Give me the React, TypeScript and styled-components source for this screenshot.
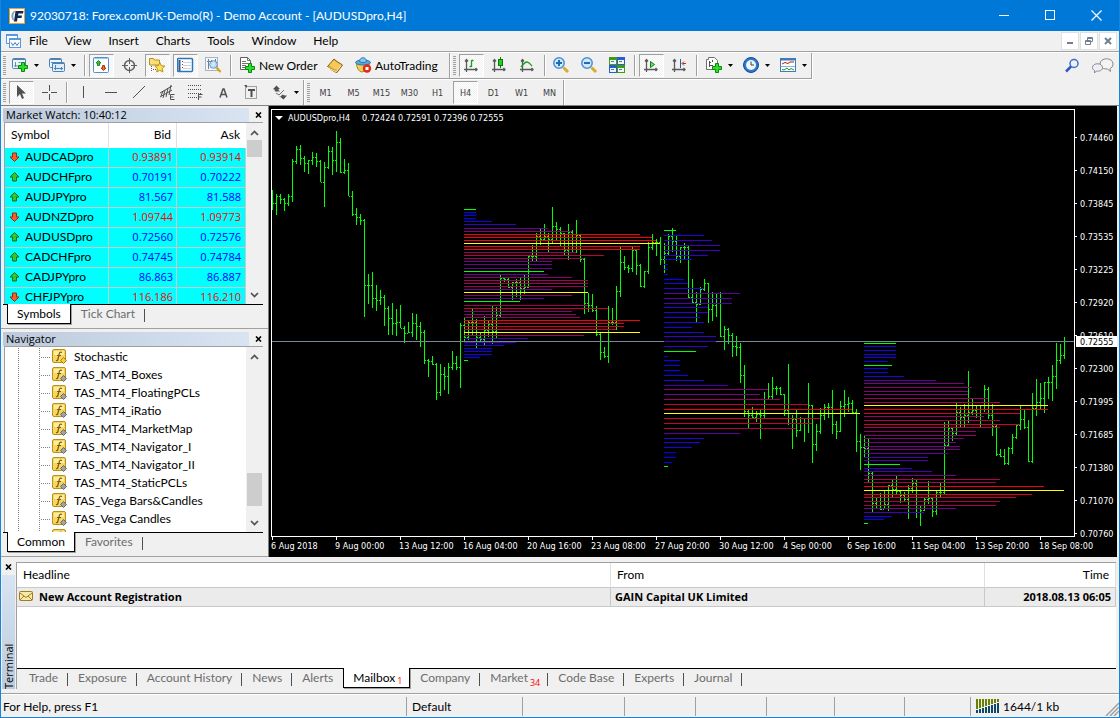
import React, { useState } from "react";
import styled, { createGlobalStyle, css } from "styled-components";

const ui = `Lato, "Open Sans", sans-serif`;
const figures = `"Open Sans", "Noto Sans", sans-serif`;
const tahoma = `"DejaVu Sans Condensed", "DejaVu Sans", sans-serif`;

const GlobalStyle = createGlobalStyle`
  * { box-sizing: border-box; }
  body { margin: 0; font-family: ${ui}; font-size: 12px; color: #000; background: #f0f0f0; }
  button { font: inherit; color: inherit; background: none; border: 0; padding: 0; margin: 0; }
  svg { display: block; flex: none; }
`;

const Window = styled.div`
  display: flex;
  flex-direction: column;
  height: 100vh;
  min-height: 480px;
  overflow: hidden;
  background: #f0f0f0;
  border: solid #1883d7;
  border-width: 0 1px 1px;
`;

/* ---------- title bar and menu ---------- */

const TitleBar = styled.header`
  display: flex;
  align-items: center;
  height: 31px;
  padding-left: 8px;
  gap: 5px;
  color: #fff;
  background: #0078d7;
`;

const Title = styled.h1`
  flex: 1;
  margin: 0;
  font-size: 12px;
  font-weight: 400;
  line-height: 16px;
  white-space: nowrap;
`;

const WindowButtons = styled.div`
  display: flex;
`;

const WindowButton = styled.button`
  display: flex;
  align-items: center;
  justify-content: center;
  width: 46px;
  height: 30px;
`;

const MenuBar = styled.nav`
  display: flex;
  align-items: center;
  height: 21px;
  padding: 0 2px 0 5px;
  border-bottom: 1px solid #a0a0a0;
`;

const MenuItem = styled.button`
  padding: 0 9px 0 8px;
  line-height: 18px;
`;

const MdiButtons = styled.div`
  display: flex;
  gap: 1px;
  margin-left: auto;
`;

const MdiButton = styled.button`
  display: flex;
  align-items: center;
  justify-content: center;
  width: 18px;
  height: 18px;
  background: #fff;
  border: 1px solid #e0e0e0;
`;

/* ---------- tool bars ---------- */

const ToolArea = styled.div`
  border-top: 1px solid #fff;
  border-bottom: 1px solid #808080;
`;

const ToolRow = styled.div`
  display: flex;
  align-items: flex-start;
  height: 27px;
  &:last-child { height: 25px; }
`;

const ToolBar = styled.div<{ $ruled?: boolean; $tail?: number }>`
  display: flex;
  align-items: center;
  gap: 3px;
  height: 26px;
  padding: 0 ${(p) => p.$tail ?? 0}px 0 2px;
  border-right: 1px solid #a0a0a0;
  box-shadow: 1px 0 #fff;
  ${(p) => p.$ruled && css`border-bottom: 1px solid #a0a0a0; box-shadow: 1px 1px #fff;`}
  & + & { padding-left: 3px; }
  ${ToolRow}:last-child & { height: 25px; }
`;

const Grip = styled.span`
  width: 3px;
  height: 20px;
  background: repeating-linear-gradient(#a0a0a0 0 1px, #f0f0f0 1px 2px);
`;

const Divider = styled.span`
  width: 2px;
  height: 21px;
  margin-left: 1px;
  border-left: 1px solid #a0a0a0;
  border-right: 1px solid #fff;
`;

const ToolButton = styled.button<{ $on?: boolean }>`
  display: flex;
  align-items: center;
  justify-content: center;
  width: 25px;
  height: 23px;
  color: #404040;
  font: 9px ${tahoma};
  border: 1px solid transparent;
  ${(p) => p.$on && css`
    border-color: #a0a0a0 #fff #fff #a0a0a0;
    background: repeating-conic-gradient(#fff 0 25%, #f0f0f0 0 50%) 0 0 / 2px 2px;
  `}
`;

const SplitButton = styled.button<{ $inset?: number }>`
  display: flex;
  align-items: center;
  justify-content: space-between;
  width: 34px;
  height: 23px;
  padding: 0 ${(p) => 7 - (p.$inset ?? 3)}px 0 ${(p) => p.$inset ?? 3}px;
`;

const TextButton = styled.button<{ $width: number }>`
  display: flex;
  align-items: center;
  gap: 3px;
  width: ${(p) => p.$width}px;
  height: 23px;
  padding-left: 4px;
  white-space: nowrap;
`;

const ToolRight = styled.div`
  display: flex;
  align-items: center;
  gap: 12px;
  height: 25px;
  margin-left: auto;
  padding-right: 5px;
`;

/* ---------- docked panels ---------- */

const Workspace = styled.div`
  display: flex;
  flex: 1;
  min-height: 0;
`;

const Dock = styled.div`
  display: grid;
  grid-template-rows: 223px minmax(0, 1fr);
  gap: 1px;
  width: 268px;
  flex: none;
  border-right: 1px solid #808080;
`;

const Panel = styled.section`
  display: flex;
  flex-direction: column;
  min-height: 0;
  padding: 1px 5px 3px 2px;
  border-bottom: 1px solid #a0a0a0;
`;

const PanelHead = styled.div`
  display: flex;
  align-items: center;
  justify-content: space-between;
  height: 15px;
  padding-right: 1px;
`;

const PanelTitle = styled.h2`
  flex: 0 0 246px;
  margin: 0;
  padding-left: 3px;
  font: 400 11px/14px ${figures};
  background: linear-gradient(90deg, #bccadb, #d8e4f2);
`;

const PanelBody = styled.div`
  display: flex;
  flex: 1;
  min-height: 0;
  margin-left: 1px;
  overflow: hidden;
  background: #fff;
  border: solid #a0a0a0;
  border-width: 1px 0 0 1px;
`;

const Quotes = styled.table`
  flex: 1;
  align-self: flex-start;
  border-collapse: separate;
  border-spacing: 0;
  table-layout: fixed;
  th { height: 25px; font-weight: 400; text-align: right; padding: 0 6px 2px; border-right: 1px solid #e0e0e0; }
  th:first-child { text-align: left; width: 104px; }
  th:nth-child(2) { width: 68px; padding-right: 5px; }
  th:last-child { border-right: 0; }
`;

const QuoteRow = styled.tr<{ $up: boolean }>`
  background: #00ffff;
  td {
    height: 20px;
    padding: 0 4px 2px 0;
    font: 11px/16px ${figures};
    text-align: right;
    color: ${(p) => (p.$up ? "#0000ff" : "#ff0000")};
    border-right: 1px solid #c8c8c8;
    border-bottom: 1px solid #c8c8c8;
  }
  td:first-child { font: 12px/16px ${ui}; }
  td:nth-child(2) { padding-right: 3px; }
`;

const SymbolCell = styled.div`
  display: flex;
  align-items: center;
  gap: 5px;
  padding-left: 4px;
  color: #000;
`;

const ScrollBar = styled.div`
  display: flex;
  flex-direction: column;
  align-items: center;
  width: 17px;
  flex: none;
  padding: 7px 0 6px;
  background: #f0f0f0;
`;

const ScrollTrack = styled.div<{ $before: number; $after: number }>`
  display: flex;
  flex-direction: column;
  flex: 1;
  width: 15px;
  margin: 4px 0;
  &::before { content: ""; flex: ${(p) => p.$before}; }
  &::after { content: ""; flex: ${(p) => p.$after}; }
`;

const ScrollThumb = styled.div<{ $size: number }>`
  height: ${(p) => p.$size}px;
  background: #cdcdcd;
`;

const Tree = styled.ul`
  flex: 1;
  height: 100%;
  margin: 0;
  padding: 1px 0 0;
  list-style: none;
  overflow: hidden;
`;

const TreeItem = styled.li`
  display: flex;
  align-items: center;
  height: 18px;
  white-space: nowrap;
  span { padding: 0 0 2px 6px; }
`;

const TabStrip = styled.div<{ $start: number }>`
  display: flex;
  align-items: flex-start;
  height: 21px;
  flex: none;
  padding-left: ${(p) => p.$start}px;
  border-top: 1px solid #000;
`;

const Tab = styled.button<{ $active: boolean; $rule: boolean }>`
  display: flex;
  height: 20px;
  padding: 0 10px;
  line-height: 18px;
  color: #6d6d6d;
  position: relative;
  white-space: nowrap;
  ${(p) => p.$rule && css`
    &::after { content: ""; position: absolute; right: 0; top: 4px; height: 13px; width: 1px; background: #505050; }
  `}
  ${(p) => p.$active && css`
    margin-top: -1px;
    color: #000;
    background: #fff;
    border: solid #000;
    border-width: 0 1px 1px;
    padding: 0 9px;
    line-height: 20px;
    box-shadow: 1px 1px #a0a0a0;
  `}
`;

const Count = styled.span`
  align-self: flex-end;
  margin: 0 -2px 0 2px;
  color: #f00;
  font: 9px/12px ${figures};
`;

/* ---------- chart ---------- */

const ChartPane = styled.section`
  flex: 1;
  min-width: 0;
  margin-right: 2px;
  background: #000;
  svg { width: 100%; height: 100%; }
  text { font: 9px ${tahoma}; fill: #fff; white-space: pre; }
  text.bid { fill: #000; }
`;

/* ---------- terminal ---------- */

const Terminal = styled.section`
  display: flex;
  height: 137px;
  flex: none;
  padding: 5px 3px 4px 0;
  border-bottom: 1px solid #a0a0a0;
`;

const TerminalSide = styled.div`
  display: flex;
  flex-direction: column;
  align-items: center;
  width: 15px;
  flex: none;
  padding-top: 2px;
`;

const TerminalTitle = styled.h2`
  flex: 1;
  width: 13px;
  margin: 5px 0 0;
  font: 400 11px/13px ${figures};
  writing-mode: vertical-rl;
  transform: rotate(180deg);
  background: linear-gradient(#bccadb, #d8e4f2);
`;

const TerminalMain = styled.div`
  display: flex;
  flex-direction: column;
  flex: 1;
  min-width: 0;
  border: solid #a0a0a0;
  border-width: 1px 0 0 1px;
`;

const MailArea = styled.div`
  flex: 1;
  background: #fff;
`;

const Mail = styled.table`
  width: 100%;
  table-layout: fixed;
  border-collapse: separate;
  border-spacing: 0;
  th { height: 25px; padding: 0 6px 2px; text-align: left; font-weight: 400; border-right: 1px solid #e0e0e0; border-bottom: 1px solid #c8c8c8; }
  th:nth-child(2) { width: 374px; }
  th:last-child { width: 131px; text-align: right; }
  td { height: 19px; padding: 0 4px 2px; font: 700 11px/15px ${figures}; background: #ebebeb; border-right: 1px solid #c8c8c8; border-bottom: 1px solid #c8c8c8; }
  td:last-child { text-align: right; }
`;

const Subject = styled.div`
  display: flex;
  align-items: center;
  gap: 6px;
  margin-left: -2px;
`;

const StatusBar = styled.footer`
  display: flex;
  align-items: center;
  height: 23px;
  flex: none;
  border-top: 1px solid #fff;
`;

const StatusCell = styled.div<{ $width?: number }>`
  display: flex;
  align-items: center;
  gap: 3px;
  height: 19px;
  padding-left: 5px;
  border-left: 1px solid #a0a0a0;
  ${(p) => (p.$width ? `width: ${p.$width}px;` : "flex: 1;")}
  &:first-child { padding-left: 2px; border-left: 0; }
`;

const Resize = styled.span`
  align-self: flex-end;
  margin-left: auto;
`;

/* ---------- icons ---------- */

const Plus = ({ x, y }: { x: number; y: number }) => (
  <path
    transform={`translate(${x} ${y})`}
    d="M3.5 .5h3v3h3v3h-3v3h-3v-3h-3v-3h3z"
    fill="#2be02b"
    stroke="#0a8a0a"
  />
);

const Axes = () => (
  <path d="M3.500 2v13M1 12.500h13.500M2 4.500l1.500-2l1.500 2M12.500 11l1.500 1.500l-1.500 1.500" fill="none" stroke="#585858" strokeWidth="1.300" />
);

const glyphs: Record<string, React.ReactNode> = {
  newChart: (
    <>
      <rect x=".5" y="1.500" width="13" height="10" rx="1" fill="#eef6ff" stroke="#4b84b4" />
      <path d="M1 2.500h12" stroke="#4b84b4" />
      <path d="M3.500 5v5M2 9h6M6.500 5.500h2" stroke="#6b8ba8" fill="none" />
      <Plus x={6} y={5} />
    </>
  ),
  profiles: (
    <>
      <rect x=".5" y="1.500" width="12" height="9" rx="1" fill="#eef6ff" stroke="#4b84b4" />
      <path d="M1 2.500h11M2 5.500h9" stroke="#4b84b4" />
      <rect x="3.500" y="5.500" width="12" height="9" rx="1" fill="#dcecfb" stroke="#4b84b4" />
      <path d="M4 6.500h11M6.500 8v5M5 11.500h9M12.500 10v3" stroke="#4b84b4" />
    </>
  ),
  market: (
    <>
      <rect x=".5" y=".5" width="15" height="15" rx="1" fill="#fff" stroke="#4b90d0" />
      <path d="M1 1.500h14" stroke="#9cc8ee" />
      <path d="M5.500 3.500l2.500 2.500h-1.500v2.500h-2v-2.500h-1.500z" fill="#3cc83c" stroke="#178a17" />
      <path d="M10.500 13.500l2.500-2.500h-1.500v-2.500h-2v2.500h-1.500z" fill="#f06a3c" stroke="#b0380e" />
    </>
  ),
  target: (
    <g fill="none" stroke="#606060">
      <circle cx="8.500" cy="8.500" r="5" strokeWidth="1.500" />
      <path d="M8.500 1v6M8.500 10v6M1 8.500h6M10 8.500h6" />
    </g>
  ),
  navigator: (
    <>
      <path d="M.5 1.500h4l1 1.500h5v5h-10z" fill="#f8df7a" stroke="#b8901c" />
      <path d="M2.500 9v6M4 12.500h3" stroke="#606060" strokeDasharray="1 1" />
      <path d="M11.500 5.500l1.500 3.200l3.500.4l-2.600 2.400l.7 3.500l-3.100-1.700l-3.100 1.700l.7-3.500l-2.600-2.400l3.500-.4z" fill="#ffe25a" stroke="#b8901c" transform="translate(-.7 0)" />
    </>
  ),
  terminal: (
    <>
      <rect x=".5" y="1.500" width="15" height="13" rx="1" fill="#fff" stroke="#2f76b8" strokeWidth="1.500" />
      <path d="M2.500 3v11" stroke="#2f5f90" strokeWidth="2" />
      <path d="M6 5.500h8M6 8.500h8M6 11.500h8" stroke="#c4d4e4" />
      <path d="M5 4.500h1M5 7.500h1M5 10.500h1" stroke="#c02020" />
    </>
  ),
  tester: (
    <>
      <rect x=".5" y=".5" width="12" height="13" fill="#f2f6fa" stroke="#a8b4c0" />
      <path d="M3.500 2v10M10.500 2v8M2 4.500h4M7 9.500h4M6.500 3v5" stroke="#708090" />
      <circle cx="8.500" cy="7.500" r="3.800" fill="#c8e4fa" fillOpacity=".85" stroke="#5c94c4" />
      <path d="M11.500 10.500l4 4.500" stroke="#d8a420" strokeWidth="2.400" />
    </>
  ),
  order: (
    <>
      <path d="M1.500 .5h7l3 3v9h-10z" fill="#fff" stroke="#606060" />
      <path d="M8.500 .5v3h3M3 4.500h4M3 6.500h6M3 8.500h4M3 10.500h3" fill="none" stroke="#707070" />
      <Plus x={6} y={6} />
    </>
  ),
  book: (
    <>
      <path d="M.5 9.500l6.500-7.500c3 3 5 3.500 8.500 6l-5.500 7.500c-4-1-6-3-9.500-6z" fill="#d29a1e" stroke="#8c5e08" />
      <path d="M2 8.500l5-5.500c3 3 5 3.500 7.500 5l-4.500 5c-3-.5-5-2-8-4.500z" fill="#f4c85c" />
      <path d="M1.500 10.500c3 2.500 5 3.500 8 4l4.500-6" fill="none" stroke="#fff0c0" />
    </>
  ),
  auto: (
    <>
      <path d="M1.500 6.500h13l-3 7l-5 1.500c-3-1-5-4-5-8.500z" fill="#f0cc58" stroke="#b08418" />
      <ellipse cx="8" cy="5.500" rx="7.500" ry="2.500" fill="#58a8dc" stroke="#2c78ac" />
      <path d="M4.500 4.500c0-5 7-5 7 0c-2 1.500-5 1.500-7 0z" fill="#84c8f0" stroke="#2c78ac" />
      <circle cx="12" cy="11.500" r="4.200" fill="#e02a1c" />
      <rect x="10.500" y="10" width="3" height="3" fill="#fff" />
    </>
  ),
  bars: (
    <>
      <Axes />
      <path d="M8.500 3v7M6.500 9.500h2M8.500 3.500h2" stroke="#18a018" strokeWidth="1.300" />
    </>
  ),
  candles: (
    <>
      <Axes />
      <path d="M9.500 0v11" stroke="#0a7a0a" />
      <rect x="7.500" y="2.500" width="4" height="6" fill="#20d020" stroke="#0a7a0a" />
    </>
  ),
  line: (
    <>
      <Axes />
      <path d="M2 10c3-4 4-5 6-5s3 2 5 4" fill="none" stroke="#18a018" strokeWidth="1.300" />
    </>
  ),
  zoomIn: (
    <>
      <circle cx="6" cy="6" r="5.200" fill="#cfe8fc" stroke="#4a90d0" strokeWidth="1.500" />
      <path d="M3 6h6M6 3v6" stroke="#2468b0" strokeWidth="2" />
      <path d="M10.500 10.500l4.500 4.500" stroke="#d8ac28" strokeWidth="3" />
    </>
  ),
  zoomOut: (
    <>
      <circle cx="6" cy="6" r="5.200" fill="#cfe8fc" stroke="#4a90d0" strokeWidth="1.500" />
      <path d="M3 6h6" stroke="#2468b0" strokeWidth="2" />
      <path d="M10.500 10.500l4.500 4.500" stroke="#d8ac28" strokeWidth="3" />
    </>
  ),
  tile: (
    <>
      <path d="M0 0h8v8H0zM8 8h8v8H8z" fill="#3f9c10" />
      <path d="M8 0h8v8H8zM0 8h8v8H0z" fill="#2a5cd0" />
      <path d="M1 3h6v4H1zM9 3h6v4H9zM1 11h6v4H1zM9 11h6v4H9z" fill="#eef6ee" />
      <path d="M2 4.500h3M10 4.500h3M2 12.500h3M10 12.500h3" stroke="#4878c0" />
    </>
  ),
  scroll: (
    <>
      <Axes />
      <path d="M7.500 4.500l4 3l-4 3z" fill="#60e060" stroke="#108010" />
    </>
  ),
  shift: (
    <>
      <Axes />
      <path d="M9.500 2v9" stroke="#2060a0" />
      <path d="M15 6.500h-3.500M13 4.500l-2 2l2 2" fill="none" stroke="#c02808" />
    </>
  ),
  indicators: (
    <>
      <path d="M.5 2.500h2v-2h6l3 3v9h-11z" fill="#fff" stroke="#707070" />
      <path d="M3.500 4v6M6.500 3v2M3 5.500h2M3 8.500h4" stroke="#505050" />
      <Plus x={6} y={6} />
    </>
  ),
  clock: (
    <>
      <circle cx="8" cy="8" r="7.500" fill="#2c78d0" stroke="#184c94" />
      <circle cx="8" cy="8" r="5" fill="#eef6ff" />
      <path d="M8 4.500V8h3" fill="none" stroke="#404040" />
    </>
  ),
  template: (
    <>
      <rect x=".5" y="1.500" width="15" height="13" fill="#fff" stroke="#3c7cb8" />
      <path d="M1 2.500h14" stroke="#3c7cb8" strokeWidth="2" />
      <path d="M1 9.500h14" stroke="#8cb4d8" />
      <path d="M2 7l3-1.500l3 1l2-1.500h4" fill="none" stroke="#b02010" />
      <path d="M2 12.500l2 .5l3-2l2 2l2-1.500l3 1.500" fill="none" stroke="#209020" />
    </>
  ),
  cursor: <path d="M4 1v12l3-3l2 5l2-1l-2-4.500h4z" fill="#505050" />,
  cross: <path d="M8.500 1v6M8.500 10v6M1 8.500h6M10 8.500h6" stroke="#505050" />,
  vline: <path d="M8.500 2v12" stroke="#505050" />,
  hline: <path d="M2 8.500h12" stroke="#505050" />,
  trend: <path d="M2 14L14 2" stroke="#505050" fill="none" />,
  channel: (
    <>
      <path d="M1 9l12-7M1 13l12-7M4 14l2-8M7 13l2-9M10 11l2-10M2 12l2-5" stroke="#505050" fill="none" />
      <path d="M15.500 10.500h-4v5h4M11.500 13h3" stroke="#505050" fill="none" />
    </>
  ),
  fibo: (
    <>
      <path d="M1 1.500h14M1 5.500h14M1 9.500h14M1 13.500h9" stroke="#505050" strokeDasharray="1 1" />
      <path d="M15.500 10.500h-4v5.500M11.500 13h3" stroke="#505050" fill="none" />
    </>
  ),
  textA: <path d="M5 13.500L8 5h1l3 8.500M6 10.500h5" stroke="#505050" strokeWidth="1.500" fill="none" />,
  label: (
    <>
      <rect x="2.500" y="2.500" width="11" height="12" fill="none" stroke="#505050" strokeDasharray="1 1" />
      <path d="M5 6h7M8.500 6v7" stroke="#505050" strokeWidth="2" />
      <path d="M1 1h3v3z" fill="#505050" />
    </>
  ),
  arrows: (
    <>
      <path d="M1 5l3.500-3.500L8 5l-2 .5l2 2h-5l-.5-2z" fill="#505050" />
      <path d="M7 12l2 .5l1-2l3 1h2l-3.500 4z" fill="#505050" />
      <path d="M4 9l3 2l5-5" fill="none" stroke="#707070" />
    </>
  ),
};

const Glyph = ({ name }: { name: string }) => (
  <svg width="17" height="17" viewBox="0 0 17 17" aria-hidden="true">
    {glyphs[name]}
  </svg>
);

const Caret = () => (
  <svg width="5" height="3" viewBox="0 0 5 3" aria-hidden="true">
    <path d="M0 0h5L2.500 3z" fill="#000" />
  </svg>
);

const CloseMark = () => (
  <svg width="7" height="6" viewBox="0 0 7 6" aria-hidden="true">
    <path d="M1 .5l5 5M6 .5l-5 5" stroke="#000" strokeWidth="1.600" />
  </svg>
);

const Chevron = ({ down }: { down?: boolean }) => (
  <svg width="9" height="6" viewBox="0 0 9 6" aria-hidden="true">
    <path d={down ? "M1 1l3.500 3.500L8 1" : "M1 5l3.500-3.500L8 5"} fill="none" stroke="#505050" strokeWidth="1.700" />
  </svg>
);

const Direction = ({ up }: { up: boolean }) => (
  <svg width="11" height="11" viewBox="0 0 11 11" aria-hidden="true">
    {up ? (
      <path d="M5.500 1.500l4.500 4.500h-2.500v4h-4v-4h-2.500z" fill="#34c434" stroke="#0c7010" />
    ) : (
      <path d="M5.500 10.500l4.500-4.500h-2.500v-4h-4v4h-2.500z" fill="#f4602c" stroke="#a02c08" />
    )}
  </svg>
);

const FunctionIcon = ({ gold }: { gold?: boolean }) => (
  <svg width="16" height="16" viewBox="0 0 16 16" aria-hidden="true">
    <rect x=".5" y=".5" width="13" height="13" rx="1.500" fill="#f6d65c" stroke="#b8901c" />
    <path d="M2 2h10v4H2z" fill="#fcec9c" />
    <path d="M10 3.500c-2-1-2.500 0-3 2.500l-1 4c-.4 1.500-1 2-2 1.500M5 6.500h4" fill="none" stroke="#7c5c10" strokeWidth="1.200" />
    <path d="M11.500 8.500l3 3l-3 3l-3-3z" fill={gold ? "#f8cc38" : "#a4a4a4"} stroke={gold ? "#a87c10" : "#686868"} />
  </svg>
);

const Branch = () => (
  <svg width="47" height="18" viewBox="0 0 47 18" aria-hidden="true" shapeRendering="crispEdges">
    <path d="M13.500 0v18M34.500 0v18M36 9.500h10" stroke="#808080" strokeDasharray="1 1" fill="none" />
  </svg>
);

const Logo = () => (
  <svg width="16" height="16" viewBox="0 0 16 16" aria-hidden="true">
    <rect x=".5" y=".5" width="15" height="15" fill="#fff" stroke="#f0a030" />
    <path d="M7 2.500C1 3 1 12 6 13.500C3.500 10 4 5 7 2.500z" fill="#8aa0b4" />
    <path d="M6.500 3h8l-.5 2.500H9.500L9 7.500h4L12.500 10h-4L8 13.500H5z" fill="#14284c" />
  </svg>
);

const ChartsIcon = () => (
  <svg width="15" height="15" viewBox="0 0 15 15" aria-hidden="true">
    <rect x=".5" y=".5" width="11" height="9" fill="#fff" stroke="#5c98e0" />
    <path d="M1 1.500h10" stroke="#5c98e0" />
    <rect x="3.500" y="4.500" width="11" height="9" fill="#fff" stroke="#5c98e0" />
    <path d="M4 5.500h10" stroke="#5c98e0" />
    <path d="M5 8.500l2 3l2-3l2 3l2-3" fill="none" stroke="#3c78c8" />
  </svg>
);

/* ---------- price data ---------- */

type Bar = [high: number, low: number, close: number];
type Level = [y: number, end: number, mark?: "l" | "y"];

/* Levels are thirds of a pixel below the base line of each run of bars. */
const runs: { base: number; bars: Bar[] }[] = [
  {
    base: 105,
    bars: [
      [255,315,295],[267,332,273],[267,297,283],[279,318,295],[267,303,274],[162,291,170],[123,178,132],[120,180,159],
      [153,202,175],[165,207,167],[141,182,157],[144,186,168],[165,233,232],[171,306,186],[123,194,138],[126,210,165],
      [78,201,112],[99,206,202],[162,207,195],[174,275,274],[258,333,327],[309,360,337],[327,360,345],[342,636,541],
      [507,597,541],[501,609,579],[540,618,586],[555,600,577],[570,663,609],[603,690,640],[594,690,655],[612,693,651],
      [600,671,669],[663,714,684],[651,686,682],[624,696,655],[627,705,663],[651,726,681],[675,777,766],[762,816,768],
      [753,780,777],[774,885,861],[777,873,807],[786,855,813],[774,867,787],[738,795,775],[753,795,787],[654,849,660],
    ],
  },
  {
    base: 195,
    bars: [
      [366,440,427],[375,435,383],[342,420,381],[372,459,427],[413,438,433],[363,453,406],[378,427,387],[333,447,409],
      [336,430,361],[240,366,250],[249,262,253],[249,279,276],[261,315,262],[252,306,262],[249,315,280],[237,297,276],
      [183,280,184],[150,198,184],[114,198,124],[102,150,133],[87,135,124],[114,171,133],[36,144,94],[81,135,103],
      [96,153,115],[114,180,166],[87,195,112],[105,171,118],[75,174,121],[117,201,193],[189,357,325],[294,351,330],
      [297,351,346],[333,423,418],[414,495,472],[456,489,484],[333,504,382],[339,390,382],[273,405,290],[156,306,202],
      [183,225,217],[210,234,220],[156,231,166],[162,240,211],[207,276,274],[228,279,229],[141,237,157],[117,165,142],
      [132,183,142],[126,210,193],
    ],
  },
  {
    base: 215,
    bars: [
      [84,174,115],[57,123,64],[39,111,79],[63,138,124],[96,144,97],[84,132,97],[93,249,247],[192,264,262],
      [231,321,268],[216,270,223],[192,228,205],[204,324,283],[231,318,271],[237,306,265],[231,366,364],[333,405,343],
      [339,387,361],[354,426,394],[363,423,397],[384,504,481],[450,606,589],[582,640,601],[576,609,607],[588,621,598],
      [585,672,601],[531,609,553],[504,552,544],[486,552,520],[513,540,520],[516,540,538],[537,603,585],[447,630,610],
      [600,702,613],[585,666,646],[606,648,611],[610,681,625],[504,654,571],[570,744,688],[627,708,649],[579,657,601],
      [567,615,577],[564,609,577],[525,657,628],[618,672,649],[558,651,574],[525,606,568],[546,591,565],[555,594,592],
      [582,711,679],[657,765,697],
    ],
  },
  {
    base: 325,
    bars: [
      [333,396,370],[342,471,445],[441,561,535],[517,550,549],[504,557,553],[498,550,538],[480,558,481],[463,516,493],
      [453,507,499],[499,534,511],[502,528,523],[480,582,490],[459,504,474],[465,579,550],[540,603,556],[520,558,523],
      [468,537,520],[517,576,559],[499,570,502],[474,516,502],[291,507,361],[288,363,310],[308,348,325],[234,333,262],
      [246,306,277],[237,306,271],[138,294,262],[222,270,256],[240,279,265],[240,306,241],[180,262,193],[186,282,271],
      [237,333,304],[300,393,388],[372,396,394],[372,420,415],[366,420,370],[327,387,337],[300,342,301],[240,315,283],
      [253,312,307],[285,411,409],[204,414,250],[162,273,232],[174,252,220],[171,264,172],[156,222,172],[120,228,154],
      [54,192,106],[57,117,91],[36,102,49],
    ],
  },
];

const profiles: { x: number; base: number; peak: number; levels: Level[] }[] = [
  {
    x: 464, base: 195, peak: 588,
    levels: [
      [43,63,"l"],[52,63],[61,63],[70,63],[79,111],[88,183],[100,279],[109,352],[118,555],[127,592],[136,604],[145,616,"y"],
      [154,555],[163,555],[172,363],[181,447],[190,388],[199,291],[208,291],[220,291],[229,267,"l"],[238,279],[247,351],
      [256,399],[265,399],[274,399],[283,291],[292,399,"y"],[301,351],[310,267],[319,195,"l"],[331,399],[340,460],[349,351],
      [358,363],[367,375],[376,555],[385,507],[394,507],[403,484],[412,555,"y"],[421,387],[430,219],[442,183],[451,147],
      [460,111],[469,111],[478,111],[487,75],[496,39,"l"],
    ],
  },
  {
    x: 664, base: 215, peak: 588,
    levels: [
      [46,63,"l"],[61,147],[76,171],[91,195],[106,195],[121,159],[133,111],[148,39],[163,39],[178,39],[193,87],[205,99],
      [220,147],[235,255],[250,231],[265,231],[277,159],[292,159],[307,135],[322,147],[337,111],[352,147],[364,183],
      [379,183],[394,159],[409,123,"l"],[424,39],[436,75],[451,75],[466,75],[481,99],[496,147],[511,219],[523,339],
      [538,315],[553,375],[568,460],[583,592],[595,615,"y"],[610,496],[625,472],[640,423],[655,255],[670,147],[682,135],
      [697,111],[712,63],[727,63],[742,51],[754,39,"l"],
    ],
  },
  {
    x: 864, base: 325, peak: 600,
    levels: [
      [55,123,"l"],[64,123],[76,123],[88,123],[97,123],[109,99],[121,111,"l"],[130,99],[142,99],[154,147],[166,243],
      [175,327],[187,351],[199,340],[208,340],[220,399],[232,435],[241,579,"y"],[253,579],[265,496],[274,387],[286,435],
      [298,496],[307,435],[319,363],[331,363],[340,327],[352,303],[364,315],[373,315],[385,279],[397,219],[406,219],
      [418,135,"l"],[430,171],[439,231],[451,303],[463,435],[472,423],[484,567],[496,627,"y"],[508,531],[517,483],
      [529,435],[541,423],[550,303],[562,207],[574,111],[583,87],[595,39,"l"],
    ],
  },
];

const prices = ["0.74460", "0.74150", "0.73845", "0.73535", "0.73225", "0.72920", "0.72610", "0.72300", "0.71995", "0.71685", "0.71380", "0.71070", "0.70760"];
const times = ["6 Aug 2018", "9 Aug 00:00", "13 Aug 12:00", "16 Aug 04:00", "20 Aug 16:00", "23 Aug 08:00", "27 Aug 20:00", "30 Aug 12:00", "4 Sep 00:00", "6 Sep 16:00", "11 Sep 04:00", "13 Sep 20:00", "18 Sep 08:00"];

const px = (base: number, v: number) => base + Math.floor(v / 3);

const levelColor = (len: number, peak: number, mark?: string) => {
  if (mark === "l") return "#00ff00";
  if (mark === "y") return "#ffff00";
  const t = Math.max(0, Math.min(1, (len - 36) / (peak * 0.94 - 36)));
  return `rgb(${Math.round(255 * t)},0,${Math.round(255 * (1 - t))})`;
};

const barPath = () => {
  let index = 0;
  let previous: number | null = null;
  const parts: string[] = [];
  for (const run of runs) {
    for (const [high, low, close] of run.bars) {
      const x = 272 + 4 * index;
      const top = px(run.base, high);
      const bottom = px(run.base, low);
      const c = px(run.base, close);
      parts.push(`M${x} ${top}h1V${bottom}h-1z`);
      if (previous !== null) parts.push(`M${x - 1} ${previous}h1v1h-1z`);
      parts.push(`M${x + 1} ${c}h1v1h-1z`);
      previous = c;
      index += 1;
    }
  }
  return parts.join("");
};

const Chart = () => (
  <ChartPane aria-label="AUDUSDpro,H4 chart">
    <svg>
      <g transform="translate(-269 -106)">
        <g shapeRendering="crispEdges">
          <path d={barPath()} fill="#00ff00" />
          <path d="M272 341h802v1H272z" fill="#778899" />
          {profiles.map((p) =>
            p.levels.map(([y, end, mark]) => (
              <rect
                key={`${p.x}-${y}`}
                x={p.x}
                y={px(p.base, y)}
                width={Math.round((end - 27) / 3)}
                height="1"
                fill={levelColor(end - 27, p.peak, mark)}
              />
            ))
          )}
          <path d="M271 109h804v1H271zM271 109h1v428h-1zM271 536h804v1H271zM1074 109h1v428h-1z" fill="#fff" />
          {prices.map((p, i) => (
            <rect key={p} x="1075" y={137 + 33 * i} width="2" height="1" fill="#fff" />
          ))}
          {times.map((t, i) => (
            <rect key={t} x={272 + 64 * i} y="537" width="1" height="3" fill="#fff" />
          ))}
        </g>
        <path d="M275 116h8l-4 4z" fill="#fff" />
        <text x="288" y="121">AUDUSDpro,H4</text>
        <text x="362" y="121">0.72424 0.72591 0.72396 0.72555</text>
        {prices.map((p, i) => (
          <text key={p} x="1080" y={141 + 33 * i}>{p}</text>
        ))}
        <rect x="1076" y="336" width="41" height="11" fill="#fff" />
        <text x="1080" y="345" className="bid">0.72555</text>
        {times.map((t, i) => (
          <text key={t} x={271 + 64 * i} y="549">{t}</text>
        ))}
      </g>
    </svg>
  </ChartPane>
);

/* ---------- panels ---------- */

const quotes: [string, string, string, boolean][] = [
  ["AUDCADpro", "0.93891", "0.93914", false],
  ["AUDCHFpro", "0.70191", "0.70222", true],
  ["AUDJPYpro", "81.567", "81.588", true],
  ["AUDNZDpro", "1.09744", "1.09773", false],
  ["AUDUSDpro", "0.72560", "0.72576", true],
  ["CADCHFpro", "0.74745", "0.74784", true],
  ["CADJPYpro", "86.863", "86.887", true],
  ["CHFJPYpro", "116.186", "116.210", false],
];

const indicators = ["Stochastic", "TAS_MT4_Boxes", "TAS_MT4_FloatingPCLs", "TAS_MT4_iRatio", "TAS_MT4_MarketMap", "TAS_MT4_Navigator_I", "TAS_MT4_Navigator_II", "TAS_MT4_StaticPCLs", "TAS_Vega Bars&Candles", "TAS_Vega Candles", ""];

type TabInfo = { name: string; count?: number };

const Tabs = ({ tabs, initial, start }: { tabs: TabInfo[]; initial: number; start: number }) => {
  const [active, setActive] = useState(initial);
  return (
    <TabStrip $start={start} role="tablist">
      {tabs.map((t, i) => (
        <Tab
          key={t.name}
          role="tab"
          aria-selected={i === active}
          $active={i === active}
          $rule={i !== active && i + 1 !== active}
          onClick={() => setActive(i)}
        >
          {t.name}
          {t.count && <Count>{t.count}</Count>}
        </Tab>
      ))}
    </TabStrip>
  );
};

const Scroll = ({ before, after, size }: { before: number; after: number; size: number }) => (
  <ScrollBar aria-hidden="true">
    <Chevron />
    <ScrollTrack $before={before} $after={after}>
      <ScrollThumb $size={size} />
    </ScrollTrack>
    <Chevron down />
  </ScrollBar>
);

const PanelHeader = ({ title }: { title: string }) => (
  <PanelHead>
    <PanelTitle>{title}</PanelTitle>
    <button aria-label={`Close ${title}`}><CloseMark /></button>
  </PanelHead>
);

const MarketWatch = () => (
  <Panel>
    <PanelHeader title="Market Watch: 10:40:12" />
    <PanelBody>
      <Quotes>
        <thead>
          <tr><th>Symbol</th><th>Bid</th><th>Ask</th></tr>
        </thead>
        <tbody>
          {quotes.map(([symbol, bid, ask, up]) => (
            <QuoteRow key={symbol} $up={up}>
              <td><SymbolCell><Direction up={up} />{symbol}</SymbolCell></td>
              <td>{bid}</td>
              <td>{ask}</td>
            </QuoteRow>
          ))}
        </tbody>
      </Quotes>
      <Scroll before={0} after={1} size={17} />
    </PanelBody>
    <Tabs tabs={[{ name: "Symbols" }, { name: "Tick Chart" }]} initial={0} start={4} />
  </Panel>
);

const Navigator = () => (
  <Panel>
    <PanelHeader title="Navigator" />
    <PanelBody>
      <Tree>
        {indicators.map((name, i) => (
          <TreeItem key={i}>
            <Branch />
            <FunctionIcon gold={i === 0} />
            <span>{name}</span>
          </TreeItem>
        ))}
      </Tree>
      <Scroll before={109} after={10} size={33} />
    </PanelBody>
    <Tabs tabs={[{ name: "Common" }, { name: "Favorites" }]} initial={0} start={4} />
  </Panel>
);

const Tool = ({ name, label, on }: { name: string; label: string; on?: boolean }) => (
  <ToolButton $on={on} aria-label={label}><Glyph name={name} /></ToolButton>
);

const Split = ({ name, label, inset }: { name: string; label: string; inset?: number }) => (
  <SplitButton $inset={inset} aria-label={label}><Glyph name={name} /><Caret /></SplitButton>
);

const frames = ["M1", "M5", "M15", "M30", "H1", "H4", "D1", "W1", "MN"];

export default function App() {
  const [frame, setFrame] = useState("H4");
  return (
    <>
      <GlobalStyle />
      <Window>
        <TitleBar>
          <Logo />
          <Title>92030718: Forex.comUK-Demo(R) - Demo Account - [AUDUSDpro,H4]</Title>
          <WindowButtons>
            <WindowButton aria-label="Minimize">
              <svg width="10" height="11"><path d="M0 5.500h10" stroke="#fff" /></svg>
            </WindowButton>
            <WindowButton aria-label="Maximize">
              <svg width="11" height="11"><rect x=".5" y=".5" width="9" height="9" fill="none" stroke="#fff" /></svg>
            </WindowButton>
            <WindowButton aria-label="Close">
              <svg width="11" height="11"><path d="M.5 .5l10 10M10.500 .5l-10 10" stroke="#fff" strokeWidth="1.200" /></svg>
            </WindowButton>
          </WindowButtons>
        </TitleBar>

        <MenuBar>
          <ChartsIcon />
          {["File", "View", "Insert", "Charts", "Tools", "Window", "Help"].map((m) => (
            <MenuItem key={m}>{m}</MenuItem>
          ))}
          <MdiButtons>
            <MdiButton aria-label="Minimize chart">
              <svg width="8" height="8"><path d="M1 6h6" stroke="#708090" strokeWidth="2" /></svg>
            </MdiButton>
            <MdiButton aria-label="Restore chart">
              <svg width="9" height="9"><path d="M.5 3.500h5v4h-5zM.5 4.500h5M2.500 3V.5h5v4h-2M2.500 1.500h5" fill="none" stroke="#708090" /></svg>
            </MdiButton>
            <MdiButton aria-label="Close chart">
              <svg width="8" height="8"><path d="M1 1l6 6M7 1l-6 6" stroke="#708090" strokeWidth="2" /></svg>
            </MdiButton>
          </MdiButtons>
        </MenuBar>

        <ToolArea>
          <ToolRow>
            <ToolBar $ruled>
              <Grip />
              <Split name="newChart" label="New chart" />
              <Split name="profiles" label="Profiles" />
              <Divider />
              <Tool name="market" label="Market Watch" on />
              <Tool name="target" label="Data Window" />
              <Tool name="navigator" label="Navigator" on />
              <Tool name="terminal" label="Terminal" on />
              <Tool name="tester" label="Strategy Tester" />
              <Divider />
              <TextButton $width={85}><Glyph name="order" />New Order</TextButton>
              <Tool name="book" label="MetaEditor" />
              <TextButton $width={98}><Glyph name="auto" />AutoTrading</TextButton>
            </ToolBar>
            <ToolBar $ruled $tail={2}>
              <Grip />
              <Tool name="bars" label="Bar chart" on />
              <Tool name="candles" label="Candlesticks" />
              <Tool name="line" label="Line chart" />
              <Divider />
              <Tool name="zoomIn" label="Zoom in" />
              <Tool name="zoomOut" label="Zoom out" />
              <Tool name="tile" label="Tile windows" />
              <Divider />
              <Tool name="scroll" label="Auto scroll" on />
              <Tool name="shift" label="Chart shift" />
              <Divider />
              <Split name="indicators" label="Indicators" inset={5} />
              <Split name="clock" label="Periods" inset={5} />
              <Split name="template" label="Templates" inset={5} />
            </ToolBar>
            <ToolRight>
              <button aria-label="Search">
                <svg width="15" height="15"><circle cx="9" cy="5.500" r="4" fill="#eef4ff" stroke="#3c6cd0" strokeWidth="1.500" /><path d="M6 8.500l-5 5" stroke="#2c58c0" strokeWidth="2.500" /></svg>
              </button>
              <button aria-label="Chat">
                <svg width="22" height="16"><path d="M8 6c0-7 13-7 13 0c0 3-2 4-3 4.500l.5 3l-3-2.500c-4 0-7.500-1-7.500-5z" fill="#f4f4f4" stroke="#888" /><path d="M.5 9.500c0-5 10-5 10 0c0 3-3 4-6 3.500l-2 2v-2.500c-1-.5-2-1.500-2-3z" fill="#eceef8" stroke="#888" /></svg>
              </button>
            </ToolRight>
          </ToolRow>
          <ToolRow>
            <ToolBar $tail={2}>
              <Grip />
              <Tool name="cursor" label="Cursor" on />
              <Tool name="cross" label="Crosshair" />
              <Divider />
              <Tool name="vline" label="Vertical line" />
              <Tool name="hline" label="Horizontal line" />
              <Tool name="trend" label="Trendline" />
              <Tool name="channel" label="Equidistant channel" />
              <Tool name="fibo" label="Fibonacci retracement" />
              <Tool name="textA" label="Text" />
              <Tool name="label" label="Text label" />
              <Split name="arrows" label="Arrows" inset={5} />
            </ToolBar>
            <ToolBar $tail={1}>
              <Grip />
              {frames.map((f) => (
                <ToolButton key={f} $on={f === frame} onClick={() => setFrame(f)}>{f}</ToolButton>
              ))}
            </ToolBar>
          </ToolRow>
        </ToolArea>

        <Workspace>
          <Dock>
            <MarketWatch />
            <Navigator />
          </Dock>
          <Chart />
        </Workspace>

        <Terminal>
          <TerminalSide>
            <button aria-label="Close Terminal"><CloseMark /></button>
            <TerminalTitle>Terminal</TerminalTitle>
          </TerminalSide>
          <TerminalMain>
            <MailArea>
              <Mail>
                <thead>
                  <tr><th>Headline</th><th>From</th><th>Time</th></tr>
                </thead>
                <tbody>
                  <tr>
                    <td>
                      <Subject>
                        <svg width="14" height="11"><rect x=".5" y=".5" width="13" height="9" rx="1" fill="#f8e8a8" stroke="#a07c1c" /><path d="M1 2l6 4.500L13 2M1 9l4-4M13 9l-4-4" fill="none" stroke="#a07c1c" /></svg>
                        New Account Registration
                      </Subject>
                    </td>
                    <td>GAIN Capital UK Limited</td>
                    <td>2018.08.13 06:05</td>
                  </tr>
                </tbody>
              </Mail>
            </MailArea>
            <Tabs
              start={2}
              initial={5}
              tabs={[
                { name: "Trade" }, { name: "Exposure" }, { name: "Account History" }, { name: "News" }, { name: "Alerts" },
                { name: "Mailbox", count: 1 }, { name: "Company" }, { name: "Market", count: 34 }, { name: "Code Base" },
                { name: "Experts" }, { name: "Journal" },
              ]}
            />
          </TerminalMain>
        </Terminal>

        <StatusBar>
          <StatusCell>For Help, press F1</StatusCell>
          <StatusCell $width={116}>Default</StatusCell>
          <StatusCell $width={102} />
          <StatusCell $width={71} />
          <StatusCell $width={71} />
          <StatusCell $width={68} />
          <StatusCell $width={70} />
          <StatusCell $width={66} />
          <StatusCell $width={149}>
            <svg width="24" height="14" shapeRendering="crispEdges" aria-hidden="true">
              {[0, 1, 2, 3, 4, 5, 6, 7].map((i) => (
                <g key={i}>
                  <rect x={i * 3} y="0" width="2" height={10 - i} fill="#6b8000" />
                  <rect x={i * 3} y={11 - i} width="2" height={3 + i} fill="#104868" />
                </g>
              ))}
            </svg>
            1644/1 kb
            <Resize>
              <svg width="14" height="14"><path d="M14 1L1 14M14 5l-9 9M14 9l-5 5" stroke="#a0a0a0" strokeWidth="1.500" /></svg>
            </Resize>
          </StatusCell>
        </StatusBar>
      </Window>
    </>
  );
}
